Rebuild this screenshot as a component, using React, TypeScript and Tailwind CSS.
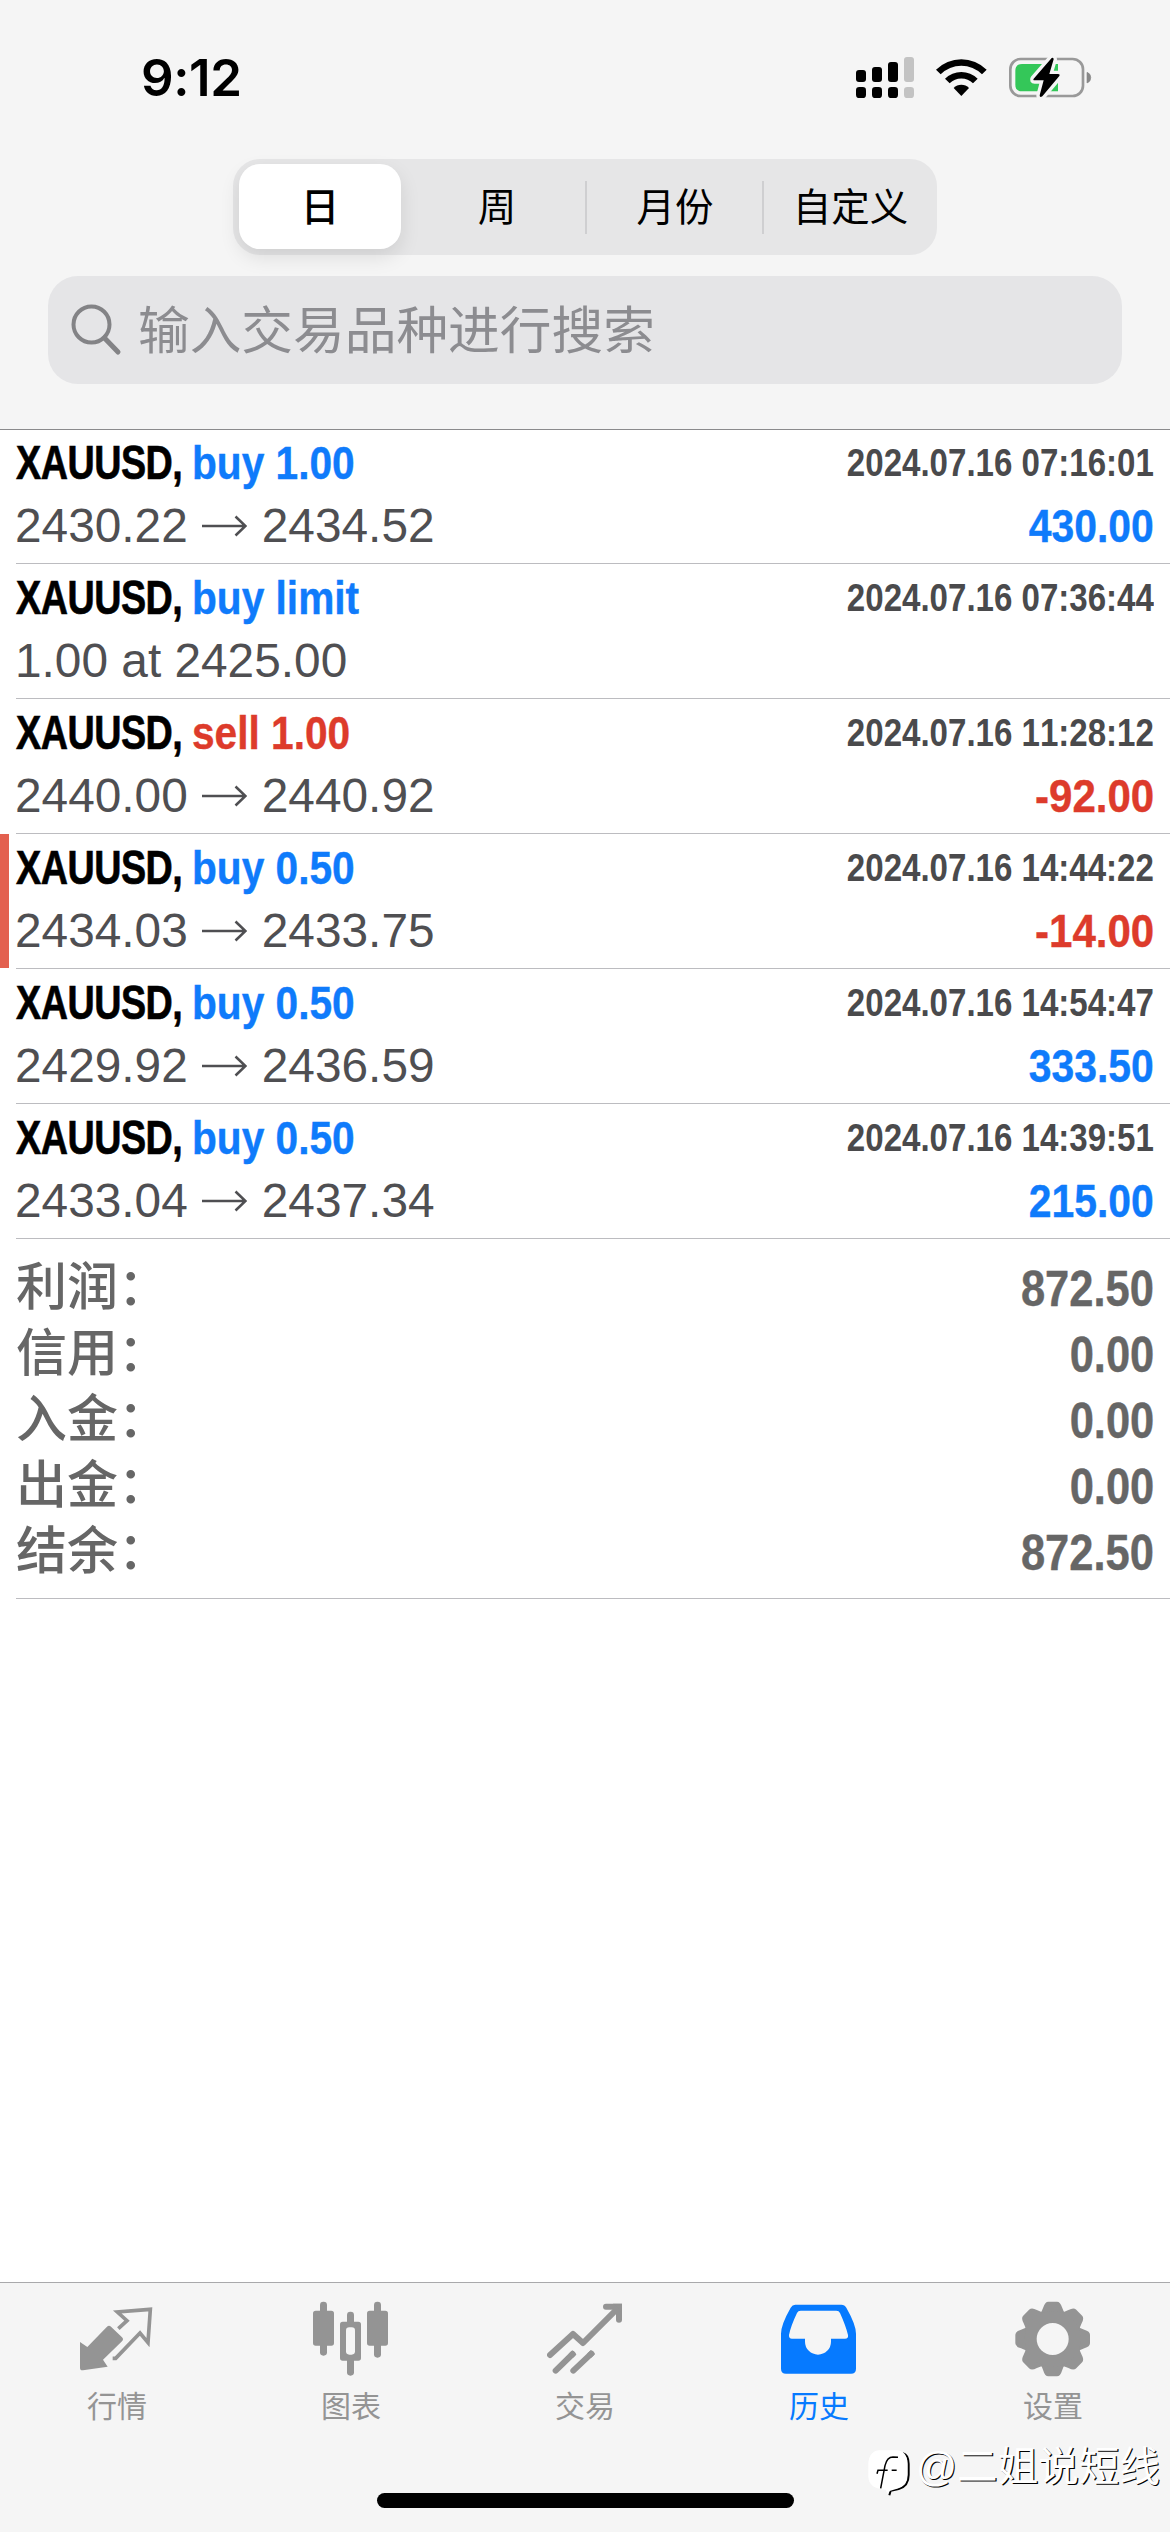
import React from "react";

type Side = "buy" | "sell";
type Deal = {
  symbol: string;
  action: string;
  side: Side;
  time: string;
  from?: string;
  to?: string;
  note?: string;
  profit?: string;
  stopped?: boolean;
};

const deals: Deal[] = [
  { symbol: "XAUUSD,", action: "buy 1.00", side: "buy", time: "2024.07.16 07:16:01", from: "2430.22", to: "2434.52", profit: "430.00" },
  { symbol: "XAUUSD,", action: "buy limit", side: "buy", time: "2024.07.16 07:36:44", note: "1.00 at 2425.00" },
  { symbol: "XAUUSD,", action: "sell 1.00", side: "sell", time: "2024.07.16 11:28:12", from: "2440.00", to: "2440.92", profit: "-92.00" },
  { symbol: "XAUUSD,", action: "buy 0.50", side: "buy", time: "2024.07.16 14:44:22", from: "2434.03", to: "2433.75", profit: "-14.00", stopped: true },
  { symbol: "XAUUSD,", action: "buy 0.50", side: "buy", time: "2024.07.16 14:54:47", from: "2429.92", to: "2436.59", profit: "333.50" },
  { symbol: "XAUUSD,", action: "buy 0.50", side: "buy", time: "2024.07.16 14:39:51", from: "2433.04", to: "2437.34", profit: "215.00" },
];

const totals = [
  { label: "利润：", value: "872.50" },
  { label: "信用：", value: "0.00" },
  { label: "入金：", value: "0.00" },
  { label: "出金：", value: "0.00" },
  { label: "结余：", value: "872.50" },
];

function StatusBar() {
  return (
    <div className="flex h-[159px] items-start justify-between pl-[141px] pr-[78px]">
      <div className="mt-[47px] font-['Inter',sans-serif] text-[51px] font-semibold leading-[62px] tracking-[-0.4px] text-black">9:12</div>
      <svg className="mt-[50px] h-[56px] w-[240px]" viewBox="96 60 720 168">
        <g fill="#000">
          <rect x="108" y="120" width="30" height="36" rx="9" />
          <rect x="156" y="111" width="30" height="45" rx="9" />
          <rect x="204" y="96" width="30" height="60" rx="9" />
          <rect x="108" y="171" width="30" height="33" rx="10" />
          <rect x="156" y="171" width="30" height="33" rx="10" />
          <rect x="204" y="171" width="30" height="33" rx="10" />
        </g>
        <g fill="#c3c3c3">
          <rect x="252" y="81" width="30" height="75" rx="9" />
          <rect x="252" y="171" width="30" height="33" rx="10" />
        </g>
        <path d="M348 119 A108 108 0 0 1 500 119 L486 133 A88 88 0 0 0 362 133 Z" fill="#000" />
        <path d="M375 146 A70 70 0 0 1 473 146 L459 160 A50 50 0 0 0 389 160 Z" fill="#000" />
        <path d="M401 174 A32 32 0 0 1 447 174 L424 198 Z" fill="#000" />
        <rect x="571" y="87" width="218" height="111" rx="31" fill="none" stroke="#999" strokeWidth="8" />
        <path d="M801 127 A17 17 0 0 1 801 159 Z" fill="#888" stroke="#888" strokeWidth="2" />
        <path d="M606 102 H714 V184 H606 Q586 184 586 164 V122 Q586 102 606 102 Z" fill="#34c759" />
        <path d="M695 84 L641 146 Q638 151 644 151 H671 L659 196 Q659 204 667 199 L718 138 Q721 132 714 132 H688 L701 88 Q701 81 695 84 Z" fill="#000" stroke="#f5f5f5" strokeWidth="20" strokeLinejoin="round" paintOrder="stroke" />
      </svg>
    </div>
  );
}

function SegmentedControl() {
  return (
    <div className="mx-auto flex h-[96px] w-[704px] items-center rounded-[27px] bg-[#e6e6e7] px-[6px] text-[38.5px] text-black">
      <div className="flex h-[85px] w-[162px] -translate-y-px items-center justify-center rounded-[21px] bg-white pt-[3px] font-medium shadow-[0_8px_20px_rgba(0,0,0,0.10)]">日</div>
      <div className="flex h-full w-[184px] items-center justify-center pl-[8px] pt-[2px]">周</div>
      <div className="h-[53px] w-[2px] bg-[#cfcfd1]" />
      <div className="flex h-full w-[175px] items-center justify-center pl-px pt-[2px]">月份</div>
      <div className="h-[53px] w-[2px] bg-[#cfcfd1]" />
      <div className="flex h-full flex-1 items-center justify-center pl-[6px] pt-[2px]">自定义</div>
    </div>
  );
}

function SearchField() {
  return (
    <div className="mx-12 mt-[21px] flex h-[108px] items-center rounded-[30px] bg-[#e5e5e7] pl-[23px]">
      <svg className="h-[52px] w-[52px]" viewBox="0 0 52 52" fill="none" stroke="#838386">
        <circle cx="20.5" cy="20.5" r="18" strokeWidth="4" />
        <path d="M33.5 34 L47 48" strokeWidth="5" strokeLinecap="round" />
      </svg>
      <span className="ml-[15px] mt-px text-[51.7px] leading-[70px] text-[#8c8c90]">输入交易品种进行搜索</span>
    </div>
  );
}

function PriceArrow() {
  return (
    <svg className="ml-[14px] mr-[15px] h-[24px] w-[45px]" viewBox="0 0 45 24" fill="none" stroke="currentColor" strokeWidth="2.6">
      <path d="M0 12 H43.5 M33.5 2.5 L43.5 12 L33.5 21.5" />
    </svg>
  );
}

function DealRow({ deal, first }: { deal: Deal; first: boolean }) {
  const negative = deal.profit?.startsWith("-");
  const actionColor = deal.side === "buy" ? "text-[#0f7bfb]" : "text-[#dd3b2b]";
  const profitStyle = negative ? "scale-x-[0.895] text-[#dd3b2b]" : "scale-x-[0.87] text-[#0f7bfb]";
  return (
    <li className={`flex ${first ? "h-[134px]" : "h-[135px]"}`}>
      <div className={`h-[134px] w-[9px] ${deal.stopped ? "bg-[#e3604f]" : ""}`} />
      <div className={`ml-[7px] flex-1 border-b border-[#bcbcc0] pr-[16px] ${first ? "pt-[5px]" : "pt-[6px]"}`}>
        <div className="flex h-[56px] items-center font-bold leading-[56px]">
          <div className="flex w-[176px] whitespace-nowrap">
            <span className="block origin-left scale-x-[0.785] text-[48px] tracking-[-0.6px] text-black [-webkit-text-stroke:0.7px_currentColor]">{deal.symbol}</span>
          </div>
          <div className={`flex flex-1 whitespace-nowrap text-[47px] ${actionColor}`}>
            <span className="block origin-left scale-x-[0.865] [-webkit-text-stroke:0.4px_currentColor]">{deal.action}</span>
          </div>
          <span className="block origin-right scale-x-[0.87] whitespace-nowrap text-[38px] text-[#4a4a4c] [font-kerning:none]">{deal.time}</span>
        </div>
        <div className="flex h-[69px] items-center justify-between leading-[69px]">
          <div className="-ml-px flex items-center whitespace-nowrap text-[47.8px] text-[#4f4f52]">
            {deal.note ?? (
              <>
                <span>{deal.from}</span>
                <PriceArrow />
                <span>{deal.to}</span>
              </>
            )}
          </div>
          {deal.profit && (
            <span className={`block origin-right text-[47px] font-bold [-webkit-text-stroke:0.4px_currentColor] ${profitStyle}`}>{deal.profit}</span>
          )}
        </div>
      </div>
    </li>
  );
}

function Totals() {
  return (
    <div className="ml-[16px] border-b border-[#bcbcc0] pb-[12px] pr-[16px] pt-[17px]">
      {totals.map((t) => (
        <div key={t.label} className="flex h-[66px] items-center justify-between leading-[66px] text-[#666]">
          <span className="-mt-[3px] text-[51px] font-medium">{t.label}</span>
          <span className="block origin-right scale-x-[0.87] text-[50px] font-bold [-webkit-text-stroke:0.4px_currentColor]">{t.value}</span>
        </div>
      ))}
    </div>
  );
}

const icons = {
  quotes: (
    <svg className="size-[76px]" viewBox="237 94 228 228">
      <path d="M240 217 L262 232 L321 171 Q327 165 333 171 L366 203 Q372 209 366 215 L309 270 L323 291 L249 302 Q240 303 240 294 Z" fill="currentColor" />
      <path d="M355 177 L381 153 L352 127 L451 119 L444 219 L420 190 L347 266 L338 266" fill="none" stroke="currentColor" strokeWidth="11" />
    </svg>
  ),
  chart: (
    <svg className="size-[76px]" viewBox="939 94 228 228" fill="currentColor">
      <rect x="960" y="96" width="21" height="162" rx="10" />
      <rect x="939" y="123" width="63" height="105" rx="8" />
      <rect x="1122" y="96" width="21" height="168" rx="10" />
      <rect x="1101" y="123" width="63" height="105" rx="8" />
      <rect x="1041" y="126" width="21" height="192" rx="10" />
      <rect x="1020" y="156" width="63" height="117" rx="8" />
      <rect x="1038" y="173" width="27" height="82" rx="10" fill="#f5f5f5" />
    </svg>
  ),
  trade: (
    <svg className="size-[76px]" viewBox="141 94 228 228" fill="none" stroke="currentColor" strokeWidth="18">
      <path d="M150 256 L219 193 L249 220 L350 119" strokeLinejoin="round" strokeLinecap="round" />
      <path d="M318 111 H357 V150" strokeLinecap="round" />
      <path d="M339 102 H366 V130 Z" fill="currentColor" stroke="none" />
      <path d="M167 303 L218 253 M220 303 L274 252" strokeLinecap="round" />
      <path d="M212 259 L223 248 M268 258 L279 247" />
    </svg>
  ),
  history: (
    <svg className="size-[76px]" viewBox="843 94 228 228">
      <path fillRule="evenodd" fill="currentColor" d="M886 105 H1024 Q1034 105 1039 114 Q1068 165 1068 192 V297 Q1068 312 1053 312 H858 Q843 312 843 297 V192 Q843 165 872 114 Q877 105 886 105 Z M902 123 Q894 123 891 130 Q872 170 867 196 Q866 207 876 207 H915 V216 A39 39 0 0 0 993 216 V207 H1035 Q1046 207 1044 196 Q1038 170 1020 130 Q1017 123 1009 123 Z" />
    </svg>
  ),
  settings: (
    <svg className="size-[76px]" viewBox="525 94 228 228">
      <g transform="translate(638 208)" fill="currentColor">
        {[0, 45, 90, 135, 180, 225, 270, 315].map((a) => (
          <path key={a} transform={`rotate(${a})`} d="M-40 -72 Q-32 -82 -28 -95 Q-23 -112 -13 -112 H13 Q23 -112 28 -95 Q32 -82 40 -72 Z" />
        ))}
        <circle r="84" />
        <circle r="48" fill="#f5f5f5" />
      </g>
    </svg>
  ),
};

const tabs = [
  { icon: icons.quotes, label: "行情", active: false },
  { icon: icons.chart, label: "图表", active: false },
  { icon: icons.trade, label: "交易", active: false },
  { icon: icons.history, label: "历史", active: true },
  { icon: icons.settings, label: "设置", active: false },
];

function TabBar() {
  return (
    <nav className="flex h-[250px] flex-col border-t border-[#a9a9ab] bg-[#f5f5f5]">
      <div className="flex pt-[18px]">
        {tabs.map((t) => (
          <div key={t.label} className={`flex flex-1 flex-col items-center ${t.active ? "text-[#067aff]" : "text-[#949494]"}`}>
            {t.icon}
            <span className="mt-[10px] text-[30px] leading-[40px]">{t.label}</span>
          </div>
        ))}
      </div>
      <div className="mx-auto mb-[24px] mt-auto h-[15px] w-[417px] rounded-full bg-black" />
    </nav>
  );
}

function Watermark() {
  return (
    <div className="absolute bottom-[34px] right-[10px] flex items-center">
      <svg className="mr-[3px] h-[50px] w-[46px] overflow-visible" viewBox="80 525 138 150">
        <path d="M147 667 L151 653 L175 648 Q205 640 205 606 V573 Q205 546 188 541" fill="none" stroke="#000" strokeWidth="6" />
        <path d="M118 532 H168 Q201 534 201 571 V604 Q201 641 170 647 L148 654 L142 664 L136 650 Q86 648 84 612 V572 Q86 534 118 532 Z" fill="#fff" />
        <path d="M121 646 L134 578 Q140 552 158 552 L173 553 M110 602 L113 592 H142 M154 592 H169" fill="none" stroke="#000" strokeWidth="4.5" />
      </svg>
      <span className="-mt-[12px] whitespace-nowrap text-[40.6px] leading-[56px] text-white [text-shadow:1.2px_1.2px_0_#000]">@二姐说短线</span>
    </div>
  );
}

export default function App() {
  return (
    <div className="relative flex h-[2532px] w-[1170px] flex-col overflow-hidden bg-white font-['Liberation_Sans','Noto_Sans_CJK_SC',sans-serif]">
      <header className="h-[429px] bg-[#f5f5f5]">
        <StatusBar />
        <SegmentedControl />
        <SearchField />
      </header>
      <main className="flex-1 border-t border-[#8a8a8c]">
        <ul>
          {deals.map((d, i) => (
            <DealRow key={i} deal={d} first={i === 0} />
          ))}
        </ul>
        <Totals />
      </main>
      <TabBar />
      <Watermark />
    </div>
  );
}
